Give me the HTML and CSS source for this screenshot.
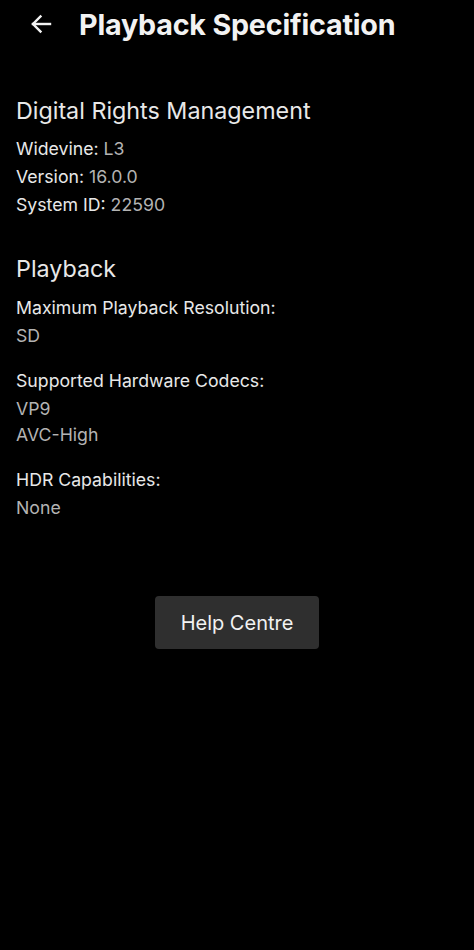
FILE: index.html
```html
<!DOCTYPE html>
<html lang="en">
<head>
  <meta charset="UTF-8" />
  <meta name="viewport" content="width=device-width, initial-scale=1.0"/>
  <title>Playback Specification</title>
  <link rel="stylesheet" href="styles.css">
</head>
<body>

<header class="topbar">
  <button class="back" aria-label="Back">
    <svg width="22" height="20" viewBox="0 0 22 20" fill="none" stroke="currentColor" stroke-width="2.4" stroke-linecap="square">
      <path d="M20 10H3"/>
      <path d="M10.5 2.5L3 10l7.5 7.5"/>
    </svg>
  </button>
  <h1>Playback Specification</h1>
</header>

<main>
  <section class="group">
    <h2>Digital Rights Management</h2>
    <p class="line">Widevine: <span class="val">L3</span></p>
    <p class="line">Version: <span class="val">16.0.0</span></p>
    <p class="line">System ID: <span class="val">22590</span></p>
  </section>

  <section class="group">
    <h2>Playback</h2>
    <div class="item">
      <p class="label">Maximum Playback Resolution:</p>
      <p class="val">SD</p>
    </div>
    <div class="item">
      <p class="label">Supported Hardware Codecs:</p>
      <p class="val">VP9</p>
      <p class="val">AVC-High</p>
    </div>
    <div class="item">
      <p class="label">HDR Capabilities:</p>
      <p class="val">None</p>
    </div>
  </section>

  <div class="actions">
    <button class="btn">Help Centre</button>
  </div>
</main>

</body>
</html>
```

FILE: styles.css
```css
:root {
  --bg-color: #000000;
  --text-color: #e8e8e8;
  --muted: #b3b3b3;
  --btn-bg: #2f2f2f;
}

body {
  margin: 0;
  font-family: Inter, "Noto Sans", sans-serif;
  background: var(--bg-color);
  color: var(--text-color);
}

p, h1, h2 {
  margin: 0;
}

.topbar {
  display: flex;
  align-items: center;
  height: 48px;
  padding-left: 30px;
}

.back {
  display: flex;
  background: none;
  border: none;
  padding: 0;
  color: #f2f2f2;
  margin-right: 27px;
}

.topbar h1 {
  font-size: 28.7px;
  font-weight: 700;
  color: #f2f2f2;
  letter-spacing: -0.2px;
}

main {
  padding: 48px 16px 0;
}

.group {
  margin-bottom: 35px;
}

.group h2 {
  font-size: 23.3px;
  font-weight: 400;
  line-height: 30px;
  margin-bottom: 9px;
}

.line {
  font-size: 17.7px;
  line-height: 28px;
}

.label {
  font-size: 17.7px;
  line-height: 30px;
}

.val {
  color: var(--muted);
  font-size: 17.7px;
  line-height: 26px;
}

.item {
  margin-bottom: 17px;
}

.actions {
  display: flex;
  justify-content: center;
  margin-top: 75px;
}

.btn {
  width: 164px;
  height: 53px;
  background: var(--btn-bg);
  color: #f2f2f2;
  border: none;
  border-radius: 4px;
  font-family: inherit;
  font-size: 20px;
}
```
